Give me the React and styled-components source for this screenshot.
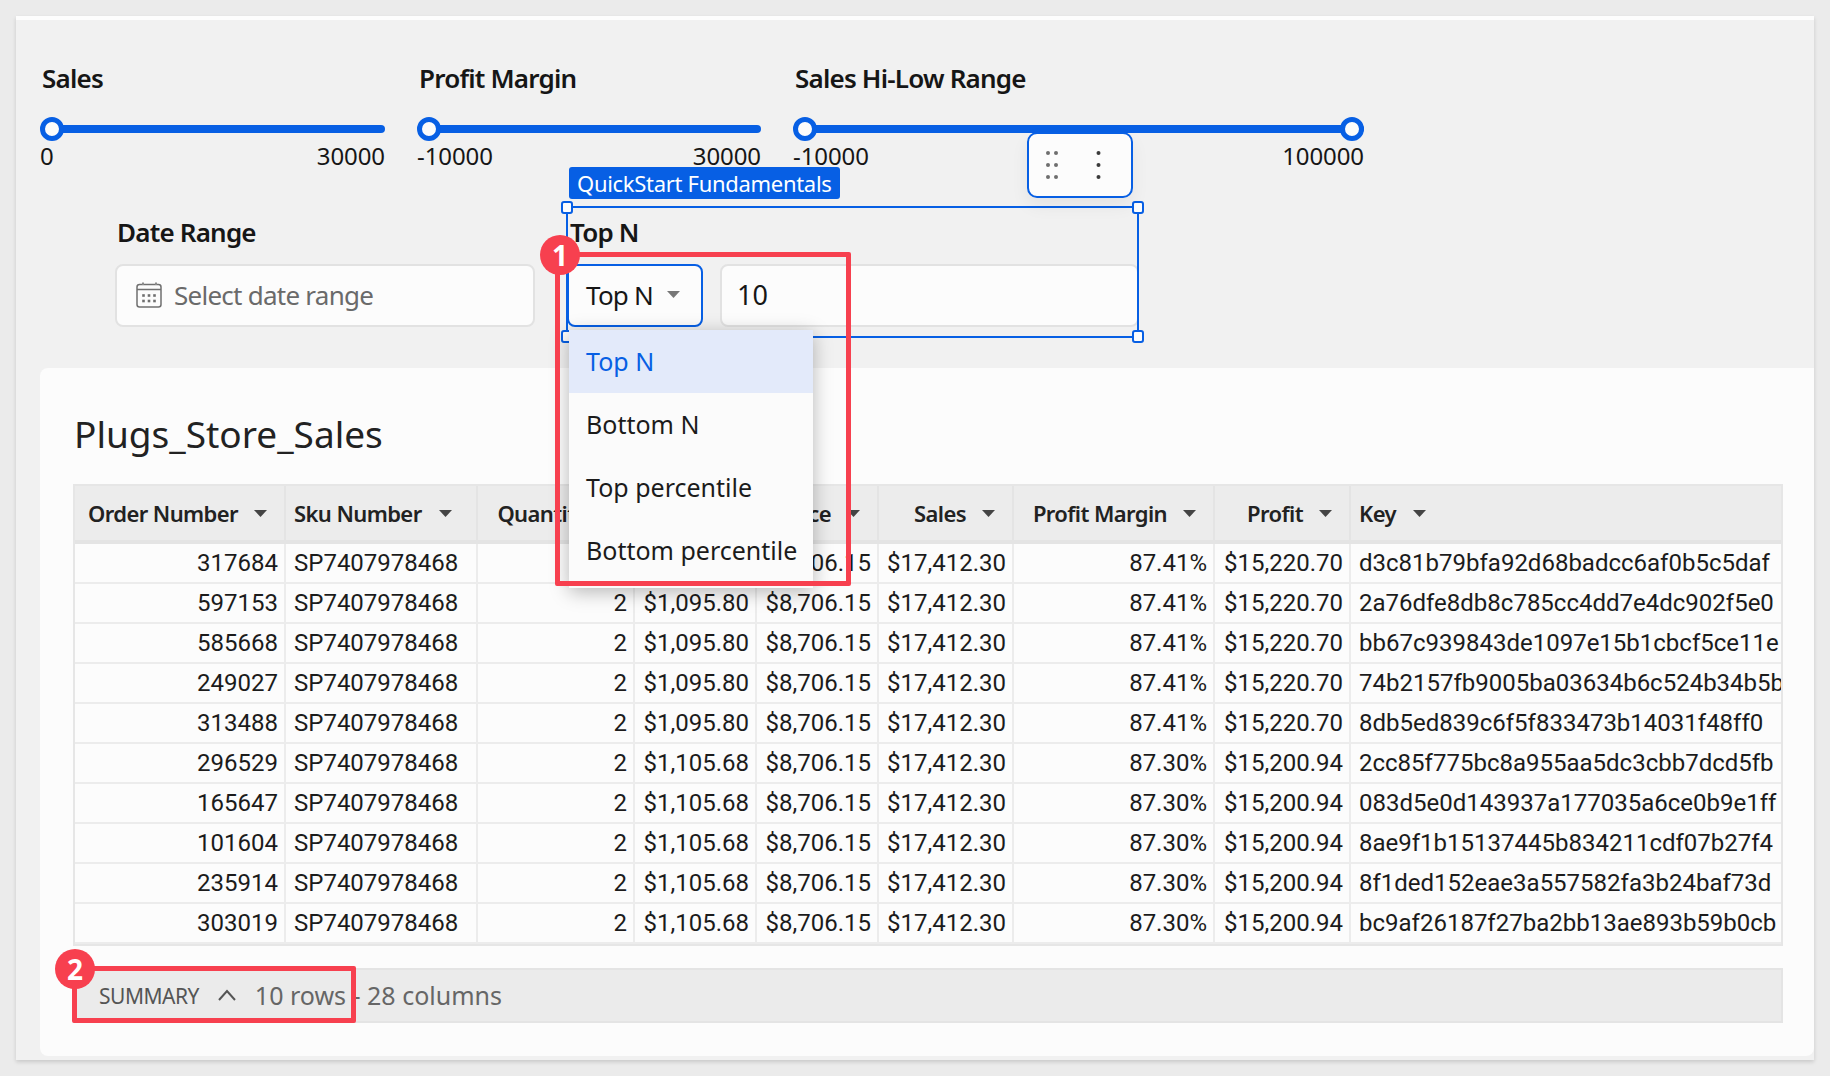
import React from "react";
import styled, { createGlobalStyle } from "styled-components";

const BLUE = "#075fe4";
const RED = "#f7404f";
const LABEL_FONT = `"Noto Sans", "Open Sans", sans-serif`;
const CELL_FONT = `Roboto, "Liberation Sans", sans-serif`;

const GlobalStyle = createGlobalStyle`
  html, body {
    margin: 0;
    padding: 0;
    background: #ebebeb;
  }
  * {
    box-sizing: border-box;
  }
`;

const Page = styled.div`
  width: 1830px;
  height: 1076px;
  padding: 16px 16px 0;
  overflow: hidden;
  background: #ebebeb;
  font-family: ${LABEL_FONT};
  color: #161616;
`;

const Canvas = styled.div`
  position: relative;
  width: 1798px;
  height: 1044px;
  padding: 40px 0 4px 24px;
  background: #f1f1f1;
  border-top: 4px solid #fdfdfd;
  box-shadow: 0 2px 4px rgba(0, 0, 0, 0.15);
`;

const SliderRow = styled.div`
  display: flex;
  gap: 32px;
`;

const Slider = styled.div`
  width: ${(props) => props.width}px;
`;

const ControlLabel = styled.div`
  height: 36px;
  padding-left: ${(props) => props.indent || 2}px;
  font-size: 26px;
  font-weight: 600;
  line-height: 36px;
  letter-spacing: -0.8px;
  white-space: nowrap;
`;

const Track = styled.div`
  position: relative;
  display: flex;
  justify-content: space-between;
  height: 24px;
  margin-top: 21px;

  &::before {
    content: "";
    position: absolute;
    left: 4px;
    right: 0;
    top: 8px;
    height: 8px;
    border-radius: 4px;
    background: ${BLUE};
  }
`;

const Thumb = styled.span`
  position: relative;
  width: 24px;
  height: 24px;
  border: 5px solid ${BLUE};
  border-radius: 50%;
  background: #fbfbfb;
`;

const SliderEnds = styled.div`
  display: flex;
  justify-content: space-between;
  height: 32px;
  font-size: 24px;
  line-height: 30px;
  letter-spacing: -0.1px;
`;

const FilterRow = styled.div`
  display: flex;
  gap: 32px;
  margin-top: 41px;
  padding-left: 75px;
`;

const Filter = styled.div`
  width: ${(props) => props.width}px;
`;

const FilterControls = styled.div`
  display: flex;
  gap: 17px;
  margin-top: 14px;
`;

const InputBox = styled.div`
  display: flex;
  flex: ${(props) => (props.$fixed ? "none" : 1)};
  align-items: center;
  gap: 12px;
  height: 63px;
  padding: 0 0 2px ${(props) => props.$pad}px;
  border: 2px solid ${(props) => (props.$active ? BLUE : "#e2e2e2")};
  border-radius: 8px;
  background: #fcfcfc;
  font-size: ${(props) => (props.$large ? 27 : 26)}px;
  letter-spacing: ${(props) => (props.$large ? 0 : -0.75)}px;
  white-space: nowrap;
`;

const Placeholder = styled.span`
  color: #6a6a6a;
`;

const TopNSelect = styled(InputBox)`
  width: 136px;
  gap: 14px;
`;

const Panel = styled.section`
  width: 1774px;
  height: 688px;
  margin-top: 41px;
  padding: 0 31px 0 33px;
  border-radius: 8px 0 8px 8px;
  background: #fcfcfc;
`;

const PanelTitle = styled.h2`
  height: 116px;
  margin: 0;
  padding: 44px 0 0 1px;
  font-size: 37px;
  font-weight: 400;
  line-height: 44px;
  color: #222;
`;

const Table = styled.div`
  width: 1710px;
  border: 2px solid #e6e6e6;
`;

const Row = styled.div`
  display: grid;
  grid-template-columns: 211px 192px 157px 122px 122px 135px 201px 136px 430px;
`;

const HeaderCell = styled.div`
  display: flex;
  align-items: center;
  justify-content: ${(props) => (props.$left ? "flex-start" : "flex-end")};
  gap: ${(props) => (props.$left ? 17 : 16)}px;
  height: 58px;
  padding: 0 17px 0 ${(props) => (props.$left ? 8 : 0)}px;
  background: #ececec;
  border-right: 2px solid #e4e4e4;
  border-bottom: 4px solid #e4e4e4;
  font-size: 22px;
  font-weight: 600;
  letter-spacing: -0.6px;
  color: #222;
  white-space: nowrap;

  &:last-child {
    border-right: none;
  }
`;

const Cell = styled.div`
  height: 40px;
  padding: 0 ${(props) => (props.$left ? 0 : 6)}px 0 ${(props) => (props.$left ? 8 : 0)}px;
  border-right: 2px solid #ececec;
  border-bottom: 2px solid #ececec;
  font-family: ${CELL_FONT};
  font-size: 24px;
  line-height: 38px;
  text-align: ${(props) => (props.$left ? "left" : "right")};
  color: #1b1b1b;
  white-space: nowrap;
  overflow: hidden;

  &:last-child {
    border-right: none;
  }
`;

const SummaryBar = styled.div`
  display: flex;
  align-items: center;
  width: 1710px;
  height: 55px;
  margin-top: 22px;
  padding: 0 0 2px 24px;
  border: 2px solid #e4e4e4;
  background: #ebebeb;
  color: #666;
  font-size: 25px;
  white-space: nowrap;
`;

const SummaryLabel = styled.span`
  margin-right: 18px;
  padding-top: 2px;
  font-size: 21px;
  letter-spacing: -0.5px;
  color: #555;
`;

const SummaryChevron = styled.svg`
  width: 20px;
  height: 12px;
  margin-right: 18px;
`;

const Selection = styled.div`
  position: absolute;
  left: 550px;
  top: 186px;
  width: 573px;
  height: 132px;
  border: 2px solid ${BLUE};
  pointer-events: none;
`;

const Handle = styled.span`
  position: absolute;
  width: 12px;
  height: 13px;
  border: 2px solid ${BLUE};
  border-radius: 3px;
  background: #fdfdfd;
  left: ${(props) => (props.$right ? "auto" : "-7px")};
  right: ${(props) => (props.$right ? "-7px" : "auto")};
  top: ${(props) => (props.$bottom ? "auto" : "-7px")};
  bottom: ${(props) => (props.$bottom ? "-7px" : "auto")};
`;

const SelectionTag = styled.div`
  position: absolute;
  left: 553px;
  top: 147px;
  width: 271px;
  height: 32px;
  padding-left: 8px;
  border-radius: 3px;
  background: ${BLUE};
  color: #fff;
  font-size: 22px;
  line-height: 32px;
  letter-spacing: -0.3px;
  white-space: nowrap;
`;

const Toolbar = styled.div`
  position: absolute;
  left: 1011px;
  top: 112px;
  display: flex;
  align-items: center;
  gap: 38px;
  width: 106px;
  height: 66px;
  padding-left: 17px;
  border: 2px solid ${BLUE};
  border-radius: 10px;
  background: #fcfcfc;
  box-shadow: 0 8px 18px rgba(0, 0, 0, 0.06);
`;

const Menu = styled.div`
  position: absolute;
  left: 553px;
  top: 310px;
  width: 244px;
  height: 258px;
  background: #fbfbfb;
  box-shadow: 0 4px 18px rgba(0, 0, 0, 0.28);
`;

const MenuItem = styled.div`
  height: 63px;
  padding-left: 17px;
  background: ${(props) => (props.$active ? "#e3eafa" : "transparent")};
  color: ${(props) => (props.$active ? BLUE : "#1b1b1b")};
  font-size: 25px;
  line-height: 63px;
  white-space: nowrap;
`;

const Callout = styled.div`
  position: absolute;
  left: ${(props) => props.$x}px;
  top: ${(props) => props.$y}px;
  width: ${(props) => props.$w}px;
  height: ${(props) => props.$h}px;
  border: 5px solid ${RED};
  border-radius: 2px;
  pointer-events: none;
`;

const Badge = styled.div`
  position: absolute;
  left: ${(props) => props.$x}px;
  top: ${(props) => props.$y}px;
  width: 40px;
  height: 40px;
  border-radius: 50%;
  background: ${RED};
  color: #fff;
  font-size: 28px;
  font-weight: 700;
  line-height: 40px;
  text-align: center;
`;

const Caret = ({ color = "#444", width = 13, height = 7 }) => (
  <svg width={width} height={height} viewBox="0 0 13 7" style={{ flex: "none" }}>
    <path d="M0 0h13L6.5 7z" fill={color} />
  </svg>
);

const CalendarIcon = () => (
  <svg width="26" height="26" viewBox="0 0 26 26" fill="none" style={{ flex: "none", marginLeft: 3 }}>
    <rect x="1" y="2.5" width="24" height="22.5" rx="2.5" stroke="#6f6f6f" strokeWidth="1.5" />
    <path d="M1 7.5h24" stroke="#6f6f6f" strokeWidth="1.5" />
    <path d="M7 0.5v2.5M20 0.5v2.5" stroke="#8a8a8a" strokeWidth="2" />
    {[13.5, 19].map((y) =>
      [7.5, 13, 18.5].map((x) => (
        <rect key={`${x}-${y}`} x={x - 1.3} y={y - 1.3} width="2.6" height="2.6" fill="#6f6f6f" />
      ))
    )}
  </svg>
);

const GripIcon = () => (
  <svg width="12" height="28" viewBox="0 0 12 28">
    {[2, 14, 26].map((y) => (
      <g key={y} fill="#6e6e6e">
        <circle cx="2" cy={y} r="2" />
        <circle cx="10" cy={y} r="2" />
      </g>
    ))}
  </svg>
);

const KebabIcon = () => (
  <svg width="5" height="28" viewBox="0 0 5 28">
    {[2, 14, 26].map((y) => (
      <circle key={y} cx="2.5" cy={y} r="2" fill="#3a3a3a" />
    ))}
  </svg>
);

const columns = [
  { name: "Order Number" },
  { name: "Sku Number", left: true },
  { name: "Quantity" },
  { name: "Cost" },
  { name: "Price" },
  { name: "Sales" },
  { name: "Profit Margin" },
  { name: "Profit" },
  { name: "Key", left: true },
];

const first = ["2", "$1,095.80", "$8,706.15", "$17,412.30", "87.41%", "$15,220.70"];
const second = ["2", "$1,105.68", "$8,706.15", "$17,412.30", "87.30%", "$15,200.94"];

const rows = [
  ["317684", first, "d3c81b79bfa92d68badcc6af0b5c5daf"],
  ["597153", first, "2a76dfe8db8c785cc4dd7e4dc902f5e0"],
  ["585668", first, "bb67c939843de1097e15b1cbcf5ce11e"],
  ["249027", first, "74b2157fb9005ba03634b6c524b34b5b"],
  ["313488", first, "8db5ed839c6f5f833473b14031f48ff0"],
  ["296529", second, "2cc85f775bc8a955aa5dc3cbb7dcd5fb"],
  ["165647", second, "083d5e0d143937a177035a6ce0b9e1ff"],
  ["101604", second, "8ae9f1b15137445b834211cdf07b27f4"],
  ["235914", second, "8f1ded152eae3a557582fa3b24baf73d"],
  ["303019", second, "bc9af26187f27ba2bb13ae893b59b0cb"],
];

const sliders = [
  { label: "Sales", width: 345, min: "0", max: "30000" },
  { label: "Profit Margin", width: 344, min: "-10000", max: "30000" },
  { label: "Sales Hi-Low Range", width: 571, min: "-10000", max: "100000", range: true },
];

const menuItems = ["Top N", "Bottom N", "Top percentile", "Bottom percentile"];

const App = () => (
  <Page>
    <GlobalStyle />
    <Canvas>
      <SliderRow>
        {sliders.map((s) => (
          <Slider key={s.label} width={s.width}>
            <ControlLabel>{s.label}</ControlLabel>
            <Track>
              <Thumb />
              {s.range && <Thumb />}
            </Track>
            <SliderEnds>
              <span>{s.min}</span>
              <span>{s.max}</span>
            </SliderEnds>
          </Slider>
        ))}
      </SliderRow>

      <FilterRow>
        <Filter width={420}>
          <ControlLabel indent={2}>Date Range</ControlLabel>
          <FilterControls>
            <InputBox $pad={16}>
              <CalendarIcon />
              <Placeholder>Select date range</Placeholder>
            </InputBox>
          </FilterControls>
        </Filter>
        <Filter width={572}>
          <ControlLabel indent={3}>Top N</ControlLabel>
          <FilterControls>
            <TopNSelect $fixed $active $pad={17}>
              Top N
              <Caret color="#777" />
            </TopNSelect>
            <InputBox $large $pad={15}>10</InputBox>
          </FilterControls>
        </Filter>
      </FilterRow>

      <Panel>
        <PanelTitle>Plugs_Store_Sales</PanelTitle>
        <Table>
          <Row>
            {columns.map((c) => (
              <HeaderCell key={c.name} $left={c.left}>
                {c.name}
                <Caret />
              </HeaderCell>
            ))}
          </Row>
          {rows.map(([order, values, key]) => (
            <Row key={order}>
              <Cell>{order}</Cell>
              <Cell $left>SP7407978468</Cell>
              {values.map((v, i) => (
                <Cell key={i}>{v}</Cell>
              ))}
              <Cell $left>{key}</Cell>
            </Row>
          ))}
        </Table>
        <SummaryBar>
          <SummaryLabel>SUMMARY</SummaryLabel>
          <SummaryChevron viewBox="0 0 20 12" fill="none">
            <path d="M2 11l8-9 8 9" stroke="#555" strokeWidth="2" />
          </SummaryChevron>
          10 rows - 28 columns
        </SummaryBar>
      </Panel>

      <SelectionTag>QuickStart Fundamentals</SelectionTag>
      <Selection>
        <Handle />
        <Handle $right />
        <Handle $bottom />
        <Handle $right $bottom />
      </Selection>
      <Toolbar>
        <GripIcon />
        <KebabIcon />
      </Toolbar>
      <Menu>
        {menuItems.map((item, i) => (
          <MenuItem key={item} $active={i === 0}>{item}</MenuItem>
        ))}
      </Menu>
      <Callout $x={539} $y={232} $w={296} $h={334} />
      <Badge $x={524} $y={215}>1</Badge>
      <Callout $x={56} $y={946} $w={284} $h={57} />
      <Badge $x={39} $y={929}>2</Badge>
    </Canvas>
  </Page>
);

export default App;
